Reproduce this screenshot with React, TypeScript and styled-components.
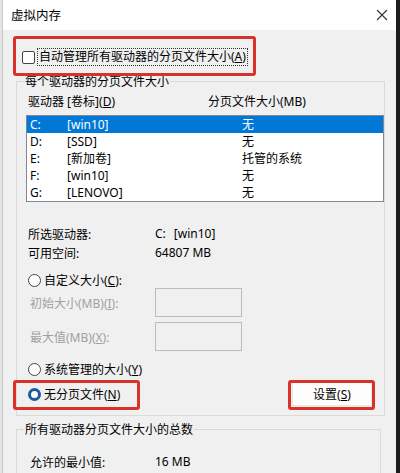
import React from 'react';
import styled, { createGlobalStyle, css } from 'styled-components';

const GlobalStyle = createGlobalStyle`
    html, body {
        margin: 0;
        padding: 0;
        background: #1f1f1f;
    }
    body {
        font-family: "Noto Sans", "Noto Sans CJK SC", sans-serif;
        font-size: 12px;
        color: #000;
    }
`;

const Page = styled.div`
    display: flex;
    width: 400px;
    height: 473px;
    overflow: hidden;
`;

const LeftStrip = styled.div`
    width: 2px;
    background: #e4e4e4;
    border-right: 1px solid #c9c9c9;
`;

const RightStrip = styled.div`
    width: 4px;
    background: #1d1d1d;
`;

const Window = styled.div`
    position: relative;
    flex: 1;
    display: flex;
    flex-direction: column;
    background: #f0f0f0;
`;

const TitleBar = styled.div`
    height: 30px;
    flex-shrink: 0;
    display: flex;
    align-items: center;
    justify-content: space-between;
    padding: 0 8px 0 8px;
    background: #fff;
    font-size: 12.5px;
`;

const Title = styled.span`
    font-family: "Noto Sans CJK SC", sans-serif;
    margin-top: -2px;
`;

const Body = styled.div`
    padding: 18px 11px 0 13px;
    display: flex;
    flex-direction: column;
`;

const CheckRow = styled.label`
    display: flex;
    align-items: center;
    height: 18px;
    margin-left: 6px;
    gap: 2px;
`;

const CheckBox = styled.span`
    width: 11px;
    height: 11px;
    border: 1px solid #444;
    border-radius: 2px;
    background: #fff;
`;

const FocusLabel = styled.span`
    border: 1px dotted #333;
    padding: 0 1px;
    line-height: 16px;
`;

const GroupBox = styled.div<{ top: number; right?: number }>`
    margin-top: ${p => p.top}px;
    margin-right: ${p => p.right || 0}px;
    border: 1px solid #dadada;
    padding: 0 0 9px 9px;
    display: flex;
    flex-direction: column;
`;

const Legend = styled.div`
    margin: -8px 0 0 -2px;
    padding: 0 1px;
    width: fit-content;
    line-height: 16px;
    background: #f0f0f0;
`;

const HeaderRow = styled.div`
    display: flex;
    margin-top: 4px;
    padding-left: 2px;
    line-height: 16px;
`;

const HeaderCell = styled.span<{ w?: number }>`
    ${p => p.w && css`width: ${p.w}px;`}
`;

const ListBox = styled.div`
    margin-top: 5px;
    border: 1px solid #828790;
    background: #fff;
    display: flex;
    flex-direction: column;
`;

const ListRow = styled.div<{ selected?: boolean }>`
    display: flex;
    height: 17px;
    line-height: 17px;
    padding-left: 3px;
    ${p => p.selected && css`
        background: #0078d7;
        color: #fff;
    `}
`;

const Cell = styled.span<{ w?: number }>`
    ${p => p.w && css`width: ${p.w}px;`}
    white-space: nowrap;
`;

const InfoRow = styled.div<{ top?: number }>`
    display: flex;
    height: 19px;
    align-items: center;
    padding-left: 2px;
    margin-top: ${p => p.top || 0}px;
`;

const InfoLabel = styled.span<{ w: number; disabled?: boolean }>`
    width: ${p => p.w}px;
    color: ${p => (p.disabled ? '#a0a0a0' : '#000')};
`;

const DriveValue = styled.span`
    display: flex;
    gap: 8px;
`;

const RadioRow = styled.div<{ top: number }>`
    display: flex;
    align-items: center;
    gap: 3px;
    height: 16px;
    padding-left: 2px;
    margin-top: ${p => p.top}px;
`;

const Radio = styled.span<{ checked?: boolean }>`
    box-sizing: border-box;
    width: 13px;
    height: 13px;
    border-radius: 50%;
    background: #fff;
    border: ${p => (p.checked ? '3.5px solid #1a5c9e' : '1px solid #444')};
`;

const FieldRow = styled.div<{ top: number }>`
    display: flex;
    align-items: center;
    padding-left: 4px;
    margin-top: ${p => p.top}px;
`;

const TextInput = styled.div`
    width: 85px;
    height: 27px;
    border: 1px solid #bcbcbc;
    background: #f0f0f0;
`;

const BottomRow = styled.div`
    display: flex;
    align-items: center;
    justify-content: space-between;
    margin-top: 5px;
    height: 24px;
`;

const Button = styled.div`
    width: 80px;
    height: 24px;
    margin-right: 12px;
    display: flex;
    align-items: center;
    justify-content: center;
    background: #fdfdfd;
    border: 1px solid #e6e6e6;
    box-sizing: border-box;
`;

const TotalRow = styled.div`
    display: flex;
    align-items: center;
    height: 19px;
    margin-top: 14px;
    padding-left: 4px;
`;

const Highlight = styled.div<{ x: number; y: number; w: number; h: number }>`
    position: absolute;
    left: ${p => p.x}px;
    top: ${p => p.y}px;
    width: ${p => p.w}px;
    height: ${p => p.h}px;
    box-sizing: border-box;
    border: 3px solid #d8322a;
    border-radius: 3px;
    pointer-events: none;
`;

const CloseIcon = () => (
    <svg width="12" height="12" viewBox="0 0 12 12">
        <path d="M1 1 L11 11 M11 1 L1 11" stroke="#333" strokeWidth="1.1" fill="none" />
    </svg>
);

const drives = [
    { letter: 'C:', label: '[win10]', size: '无', selected: true },
    { letter: 'D:', label: '[SSD]', size: '无' },
    { letter: 'E:', label: '[新加卷]', size: '托管的系统' },
    { letter: 'F:', label: '[win10]', size: '无' },
    { letter: 'G:', label: '[LENOVO]', size: '无' },
];

const App: React.FC = () => {
    return (
        <Page>
            <GlobalStyle />
            <LeftStrip />
            <Window>
                <TitleBar>
                    <Title>虚拟内存</Title>
                    <CloseIcon />
                </TitleBar>
                <Body>
                    <CheckRow>
                        <CheckBox />
                        <FocusLabel>自动管理所有驱动器的分页文件大小(<u>A</u>)</FocusLabel>
                    </CheckRow>

                    <GroupBox top={15}>
                        <Legend>每个驱动器的分页文件大小</Legend>
                        <HeaderRow>
                            <HeaderCell w={180}>驱动器 [卷标](<u>D</u>)</HeaderCell>
                            <HeaderCell>分页文件大小(MB)</HeaderCell>
                        </HeaderRow>
                        <ListBox>
                            {drives.map((d, i) => (
                                <ListRow key={i} selected={d.selected}>
                                    <Cell w={37}>{d.letter}</Cell>
                                    <Cell w={175}>{d.label}</Cell>
                                    <Cell>{d.size}</Cell>
                                </ListRow>
                            ))}
                        </ListBox>

                        <InfoRow top={22}>
                            <InfoLabel w={127}>所选驱动器:</InfoLabel>
                            <DriveValue>
                                <span>C:</span>
                                <span>[win10]</span>
                            </DriveValue>
                        </InfoRow>
                        <InfoRow>
                            <InfoLabel w={127}>可用空间:</InfoLabel>
                            <span>64807 MB</span>
                        </InfoRow>

                        <RadioRow top={10}>
                            <Radio />
                            <span>自定义大小(<u>C</u>):</span>
                        </RadioRow>
                        <FieldRow top={0}>
                            <InfoLabel w={125} disabled>初始大小(MB)(<u>I</u>):</InfoLabel>
                            <TextInput />
                        </FieldRow>
                        <FieldRow top={5}>
                            <InfoLabel w={125} disabled>最大值(MB)(<u>X</u>):</InfoLabel>
                            <TextInput />
                        </FieldRow>

                        <RadioRow top={10}>
                            <Radio />
                            <span>系统管理的大小(<u>Y</u>)</span>
                        </RadioRow>
                        <BottomRow>
                            <RadioRow top={0}>
                                <Radio checked />
                                <span>无分页文件(<u>N</u>)</span>
                            </RadioRow>
                            <Button>设置(<u>S</u>)</Button>
                        </BottomRow>
                    </GroupBox>

                    <GroupBox top={13} right={4}>
                        <Legend>所有驱动器分页文件大小的总数</Legend>
                        <TotalRow>
                            <InfoLabel w={125}>允许的最小值:</InfoLabel>
                            <span>16 MB</span>
                        </TotalRow>
                    </GroupBox>
                </Body>

                <Highlight x={10} y={36} w={243} h={40} />
                <Highlight x={10} y={380} w={127} h={30} />
                <Highlight x={285} y={380} w={87} h={30} />
            </Window>
            <RightStrip />
        </Page>
    );
};

export default App;
